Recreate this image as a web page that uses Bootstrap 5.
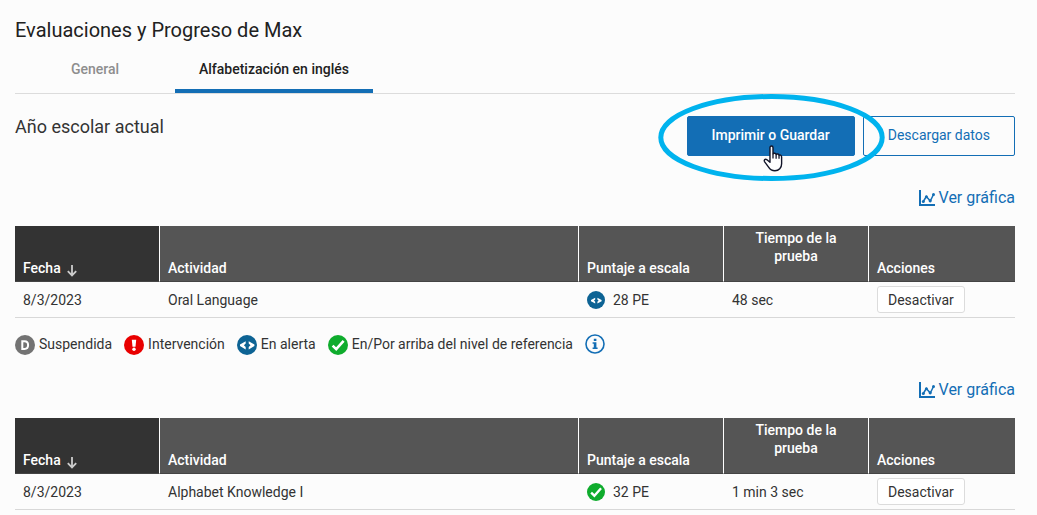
<!DOCTYPE html>
<html lang="es">
<head>
<meta charset="utf-8">
<meta name="viewport" content="width=device-width, initial-scale=1">
<title>Evaluaciones y Progreso de Max</title>
<link href="https://cdn.jsdelivr.net/npm/bootstrap@5.3.0/dist/css/bootstrap.min.css" rel="stylesheet">
<style>
  body { background: #fcfcfc; color: #333; font: 400 14px/20px Roboto, sans-serif; overflow-x: hidden; }
  .page { padding: 16px 22px 0 15px; }
  .page-title { font-size: 20px; line-height: 28px; font-weight: 400; color: #212121; }
  .section-title { font-size: 18px; line-height: 22px; font-weight: 400; }

  .tabs { border-bottom: 1px solid #dcdcdc; }
  .tabs .nav-link { min-width: 160px; height: 49px; padding: 15px 24px 0; font-weight: 500; line-height: 20px; color: #8e8e8e; text-align: center; border-bottom: 4px solid transparent; }
  .tabs .nav-link.active { color: #212121; border-bottom-color: #136eb5; }

  .year-row { padding: 22px 0 30px; }
  .action { height: 40px; padding: 0 24px 2px; border: 1px solid #136eb5; border-radius: 2px; font-size: 14px; color: #136eb5; }
  .action-main, .action-main:hover { background: #136eb5; color: #fff; font-weight: 500; }
  .highlight { left: -29px; top: -22px; width: 227px; height: 87px; z-index: 2; pointer-events: none; }
  .pointer { left: 75px; top: 29px; width: 22px; height: 28px; z-index: 3; pointer-events: none; }

  .chart-row { padding-bottom: 16px; }
  .legend-row + .chart-row { padding-top: 23px; }
  .chart-link { font-size: 16px; line-height: 24px; color: #136eb5; text-decoration: none; }

  .scores { table-layout: fixed; width: 100%; margin: 0; border-collapse: separate; border-spacing: 0; }
  .scores th { height: 56px; padding: 3px 8px 4px; background: #555; color: #fff; font-weight: 500; line-height: 18px; vertical-align: bottom; border-bottom: 1px solid #444; }
  .scores th + th { border-left: 1px solid #fff; }
  .scores th.sorted { background: #333; }
  .scores th.centered { text-align: center; vertical-align: top; }
  .scores td { height: 36px; padding: 0 8px; vertical-align: middle; border-bottom: 1px solid #d8d8d8; }
  .scores td + td { padding-left: 9px; }
  .col-date { width: 14.4%; }
  .col-small { width: 14.5%; }
  .col-actions { width: 14.7%; }
  .sort-label { gap: 6px; }
  .off-btn { height: 27px; padding: 0 10px; background: #fff; border: 1px solid #dcdcdc; border-radius: 3px; color: #333; font-size: 14px; line-height: 20px; }
  .legend-row { gap: 12px; padding-top: 16px; }
  .legend-row span svg { margin-top: 1px; }
  svg { display: block; flex: none; }
</style>
</head>
<body>
<svg width="0" height="0" class="position-absolute" aria-hidden="true">
  <symbol id="i-d" viewBox="0 0 20 20"><circle cx="10" cy="10" r="10" fill="#737373"/><path d="M7.3 6.2h2.200c2.300 0 3.600 1.500 3.600 3.800s-1.300 3.900-3.600 3.900H7.300z" fill="none" stroke="#fff" stroke-width="2"/></symbol>
  <symbol id="i-stop" viewBox="0 0 20 20"><circle cx="10" cy="10" r="10" fill="#e90000"/><path d="M7.800 4.800h4.400L11.500 11.700h-3z" fill="#fff"/><circle cx="10" cy="14.200" r="1.700" fill="#fff"/></symbol>
  <symbol id="i-eye" viewBox="0 0 20 20"><circle cx="10" cy="10" r="10" fill="#0d6394"/><path d="M8.700 6.200v2.300L6.900 10.300l1.800 1.800v2.300L3 11V9.600zM11.700 6.200v2.300l1.800 1.800-1.800 1.800v2.300L17.400 11V9.600z" fill="#fff"/></symbol>
  <symbol id="i-eye-small" viewBox="0 0 18 18"><circle cx="9" cy="9" r="9" fill="#0d6394"/><path d="M8.200 6.800v1.700L7 9.600l1.200 1.100v1.700L4 10.200V9zM10.400 6.800v1.700l1.200 1.100-1.200 1.100v1.700l4.200-2.200V9z" fill="#fff"/></symbol>
  <symbol id="i-ok" viewBox="0 0 20 20"><circle cx="10" cy="10" r="10" fill="#0fac2d"/><path d="M4.600 10.600l3.600 3.500 7.400-8.300" fill="none" stroke="#fff" stroke-width="2.600"/></symbol>
  <symbol id="i-info" viewBox="0 0 20 20"><circle cx="10" cy="10" r="9" fill="none" stroke="#136eb5" stroke-width="1.600"/><path d="M8.800 4.800h2.600v2.200H8.800zM7.600 8.300h3.800v5.200h1.200V15H7.600v-1.500h1.200V9.800H7.600z" fill="#136eb5"/></symbol>
  <symbol id="i-chart" viewBox="0 0 16 16"><path d="M1 0v15h15" fill="none" stroke="#136eb5" stroke-width="2"/><path d="M4.300 11.500L7.300 6.500l4 4.500L14.500 4.500" fill="none" stroke="#136eb5" stroke-width="1.500"/><g fill="#136eb5"><circle cx="4.300" cy="11.400" r="1.500"/><circle cx="7.400" cy="6.700" r="1.500"/><circle cx="11.200" cy="10.800" r="1.600"/><circle cx="14.500" cy="4.500" r="1.500"/></g></symbol>
  <symbol id="i-down" viewBox="0 0 10 12"><path d="M5 0v10.500M.8 6.200L5 10.500l4.200-4.300" fill="none" stroke="#ccc" stroke-width="1.800"/></symbol>
</svg>

<main class="page">
  <h1 class="page-title mb-0">Evaluaciones y Progreso de Max</h1>
  <nav class="tabs d-flex">
    <a class="nav-link" href="#general">General</a>
    <a class="nav-link active" href="#ingles" aria-current="page">Alfabetización en inglés</a>
  </nav>

  <div class="year-row d-flex justify-content-between align-items-start">
    <h2 class="section-title mb-0" id="ingles">Año escolar actual</h2>
    <div class="d-flex gap-2">
      <div class="position-relative">
        <button type="button" class="btn action action-main">Imprimir o Guardar</button>
        <svg class="highlight position-absolute" viewBox="0 0 227 87" preserveAspectRatio="none" aria-hidden="true"><ellipse cx="113.500" cy="43.500" rx="110.700" ry="41" fill="none" stroke="#00b3ee" stroke-width="5"/></svg>
        <svg class="pointer position-absolute" viewBox="0 0 20 26" aria-hidden="true"><path d="M7.200 2.500c0-1 .6-1.600 1.400-1.600s1.400.6 1.400 1.600V8.200c.4-.8 2.600-.8 2.900.6.5-.7 2.400-.6 2.700.8.600-.5 2.400-.3 2.400 1.500v6.200c0 3.800-2.500 6.600-6.200 6.600-3 0-4.600-1.200-5.900-3.300L2.100 15.400c-.8-1.500.7-2.700 2-1.900l3.100 2.600z" fill="#fff" stroke="#111428" stroke-width="1.300" stroke-linejoin="round"/><path d="M10 8.200v4.300M12.900 8.800v3.900M15.600 9.800v3" stroke="#111428" stroke-width="1.200"/></svg>
      </div>
      <button type="button" class="btn action">Descargar datos</button>
    </div>
  </div>

  <section>
    <div class="chart-row d-flex justify-content-end">
      <a class="chart-link d-flex align-items-center gap-1" href="#grafica1"><svg width="16" height="16"><use href="#i-chart"/></svg>Ver gráfica</a>
    </div>
    <table class="scores">
      <colgroup><col class="col-date"><col><col class="col-small"><col class="col-small"><col class="col-actions"></colgroup>
      <thead><tr>
        <th scope="col" class="sorted"><div class="sort-label d-flex align-items-end">Fecha<svg width="10" height="12"><use href="#i-down"/></svg></div></th>
        <th scope="col">Actividad</th><th scope="col">Puntaje a escala</th><th scope="col" class="centered">Tiempo de la<br>prueba</th><th scope="col">Acciones</th>
      </tr></thead>
      <tbody><tr>
        <td>8/3/2023</td><td>Oral Language</td>
        <td><div class="d-flex align-items-center gap-2"><svg width="18" height="18"><use href="#i-eye-small"/></svg>28 PE</div></td>
        <td>48 sec</td><td><button type="button" class="btn off-btn">Desactivar</button></td>
      </tr></tbody>
    </table>
    <div class="legend-row d-flex align-items-start">
      <span class="d-flex gap-1"><svg width="20" height="20"><use href="#i-d"/></svg>Suspendida</span>
      <span class="d-flex gap-1"><svg width="20" height="20"><use href="#i-stop"/></svg>Intervención</span>
      <span class="d-flex gap-1"><svg width="20" height="20"><use href="#i-eye"/></svg>En alerta</span>
      <span class="d-flex gap-1"><svg width="20" height="20"><use href="#i-ok"/></svg>En/Por arriba del nivel de referencia</span>
      <button type="button" class="btn p-0 border-0" aria-label="Información"><svg width="20" height="20"><use href="#i-info"/></svg></button>
    </div>
    <div class="chart-row d-flex justify-content-end">
      <a class="chart-link d-flex align-items-center gap-1" href="#grafica2"><svg width="16" height="16"><use href="#i-chart"/></svg>Ver gráfica</a>
    </div>
    <table class="scores">
      <colgroup><col class="col-date"><col><col class="col-small"><col class="col-small"><col class="col-actions"></colgroup>
      <thead><tr>
        <th scope="col" class="sorted"><div class="sort-label d-flex align-items-end">Fecha<svg width="10" height="12"><use href="#i-down"/></svg></div></th>
        <th scope="col">Actividad</th><th scope="col">Puntaje a escala</th><th scope="col" class="centered">Tiempo de la<br>prueba</th><th scope="col">Acciones</th>
      </tr></thead>
      <tbody><tr>
        <td>8/3/2023</td><td>Alphabet Knowledge I</td>
        <td><div class="d-flex align-items-center gap-2"><svg width="18" height="18"><use href="#i-ok"/></svg>32 PE</div></td>
        <td>1 min 3 sec</td><td><button type="button" class="btn off-btn">Desactivar</button></td>
      </tr></tbody>
    </table>
  </section>
</main>
<script src="https://cdn.jsdelivr.net/npm/bootstrap@5.3.0/dist/js/bootstrap.bundle.min.js"></script>
</body>
</html>
